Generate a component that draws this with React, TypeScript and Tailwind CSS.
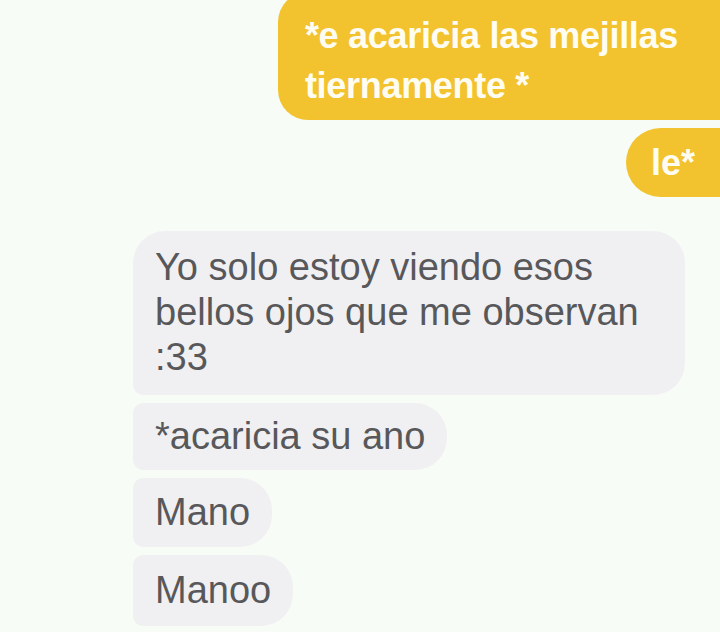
export default function App() {
  const font = { fontFamily: '"Liberation Sans", Arial, sans-serif' };

  return (
    <div
      className="w-[720px] h-[632px] overflow-hidden bg-[#f8fcf6] flex flex-col"
      style={font}
    >
      {/* sent messages */}
      <div className="flex flex-col items-end mr-[-60px] mt-[-8px] gap-[8px]">
        <div className="bg-[#f2c32f] text-[#fffdf2] font-bold text-[36px] leading-[50px] tracking-[-0.3px] rounded-l-[30px] rounded-r-[10px] pl-[27px] pr-[102px] pt-[19px] pb-[9px]">
          <p>*e acaricia las mejillas</p>
          <p>tiernamente *</p>
        </div>
        <div className="bg-[#f2c32f] text-[#fffdf2] font-bold text-[36px] leading-[47px] rounded-full pl-[25px] pr-[85px] py-[11px]">
          le*
        </div>
      </div>

      {/* received messages */}
      <div className="flex flex-col items-start ml-[133px] mt-[34px] gap-[8px] text-[#58585b] text-[38px]">
        <div className="bg-[#f0f0f2] rounded-t-[32px] rounded-br-[32px] rounded-bl-[10px] pl-[22px] pr-[30px] pt-[14px] pb-[15px] leading-[45px] w-[552px]">
          <p>Yo solo estoy viendo esos</p>
          <p>bellos ojos que me observan</p>
          <p>:33</p>
        </div>
        <div className="bg-[#f0f0f2] rounded-r-[32px] rounded-l-[10px] pl-[22px] pr-[22px] py-[11px] leading-[45px]">
          *acaricia su ano
        </div>
        <div className="bg-[#f0f0f2] rounded-r-[32px] rounded-l-[10px] pl-[22px] pr-[22px] py-[12px] leading-[45px]">
          Mano
        </div>
        <div className="bg-[#f0f0f2] rounded-r-[32px] rounded-l-[10px] pl-[22px] pr-[22px] py-[13px] leading-[45px]">
          Manoo
        </div>
      </div>
    </div>
  );
}
